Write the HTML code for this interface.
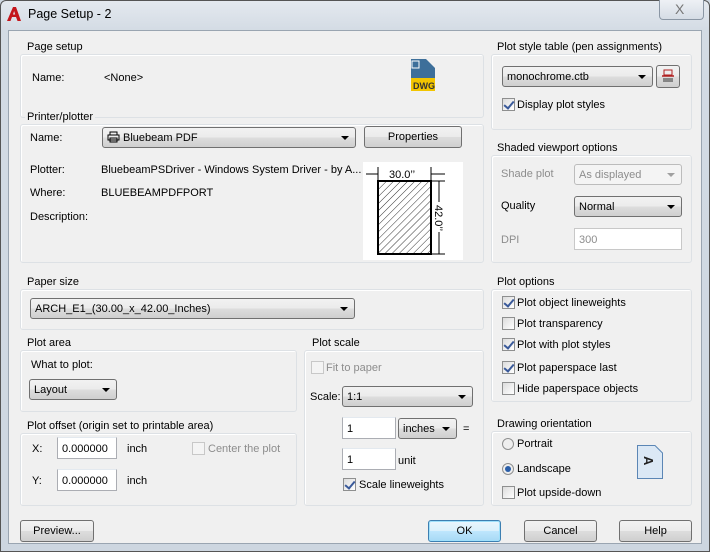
<!DOCTYPE html>
<html><head><meta charset="utf-8"><style>
*{box-sizing:border-box;margin:0;padding:0}
body{width:710px;height:552px;overflow:hidden;background:#cfd8e2;font-family:"Liberation Sans",sans-serif;font-size:11px;color:#000;position:relative}
.a{position:absolute;white-space:nowrap;line-height:14px}
.frame{position:absolute;left:0;top:0;width:710px;height:552px;border:1px solid #555;border-radius:6px 6px 0 0;background:linear-gradient(#e4e9ef,#d3dbe4 30px,#cdd6e0)}
.client{position:absolute;left:8px;top:30px;width:694px;height:514px;background:#f0f0f0;border:1px solid #9aa5b1}
.g{position:absolute;border:1px solid #dde1e5;border-radius:3px;background:#f0f0f0;box-shadow:inset 1px 1px 0 #fff}
.gl{position:absolute;background:#f0f0f0;padding:0 2px;line-height:14px;white-space:nowrap}
.dd{position:absolute;height:21px;border:1px solid #707070;border-radius:3px;background:linear-gradient(#f2f2f2,#ebebeb 50%,#dddddd 51%,#cfcfcf);padding:4px 4px 0;line-height:13px;white-space:nowrap}
.dd:after{content:"";position:absolute;right:6px;top:8px;border-left:4px solid transparent;border-right:4px solid transparent;border-top:4px solid #000}
.dis{border-color:#bcbcbc;background:#f4f4f4;color:#8d8d8d}
.dis:after{border-top-color:#a0a0a0}
.btn{position:absolute;height:22px;border:1px solid #707070;border-radius:3px;background:linear-gradient(#f2f2f2,#ebebeb 50%,#dddddd 51%,#cfcfcf);text-align:center;line-height:20px}
.tb{position:absolute;height:22px;border:1px solid #abadb3;border-top-color:#e3e9ef;background:#fff;padding:4px 4px 0;line-height:14px}
.cb{position:absolute;width:13px;height:13px;border:1px solid #8e8f8f;background:linear-gradient(135deg,#dcdcdc,#fff)}
.cb.c:after{content:"";position:absolute;left:3px;top:0px;width:4px;height:8px;border:solid #3a5a9a;border-width:0 2px 2px 0;transform:rotate(40deg)}
.cb.d{border-color:#c8c8c8;background:#f4f4f4}
.gray{color:#8d8d8d}
</style></head><body>
<div class="frame"></div>
<svg style="position:absolute;left:6px;top:6px" width="16" height="16" viewBox="0 0 16 16"><path d="M1 15 L7 1 H10 L15 15 H11.5 L10 11 H6 L4.5 15Z M7 8.5 H9.2 L8.1 5Z" fill="#c4161c"/></svg>
<div class="a" style="left:28px;top:7px;font-size:12.5px">Page Setup - 2</div>
<div style="position:absolute;left:659px;top:0;width:45px;height:20px;border:1px solid #8a96a4;border-top:none;border-radius:0 0 4px 4px;background:linear-gradient(#eef1f5,#d5dce5)"></div>
<div class="a" style="left:675px;top:2px;font-size:14px;color:#777">X</div>
<div class="client"></div>

<div class="g" style="left:20px;top:54px;width:464px;height:64px"></div><div class="gl" style="left:25px;top:40px">Page setup</div>
<div class="a" style="left:32px;top:71px">Name:</div><div class="a" style="left:104px;top:71px">&lt;None&gt;</div>
<svg style="position:absolute;left:408px;top:58px" width="30" height="34" viewBox="0 0 30 34"><path d="M3 1 H18 L27 10 V20 H3Z" fill="#3d6f9a"/><path d="M3 20 H27 V33 H3Z" fill="#f2c500"/><rect x="4" y="3" width="7" height="7" fill="none" stroke="#fff"/><text x="5" y="31" font-size="9" font-weight="bold" fill="#333" font-family="Liberation Sans">DWG</text></svg>

<div class="g" style="left:20px;top:124px;width:464px;height:139px"></div><div class="gl" style="left:25px;top:110px">Printer/plotter</div>
<div class="a" style="left:30px;top:131px">Name:</div>
<div class="dd" style="left:102px;top:127px;width:254px;padding-left:20px">Bluebeam PDF</div>
<svg style="position:absolute;left:107px;top:131px" width="13" height="12" viewBox="0 0 13 12"><path d="M3 4V1H10V4M1 4H12V9H1ZM3 7H10V11H3Z" fill="none" stroke="#000"/></svg>
<div class="btn" style="left:364px;top:126px;width:98px">Properties</div>
<div class="a" style="left:30px;top:163px">Plotter:</div><div class="a" style="left:101px;top:163px">BluebeamPSDriver - Windows System Driver - by A...</div>
<div class="a" style="left:30px;top:186px">Where:</div><div class="a" style="left:101px;top:186px">BLUEBEAMPDFPORT</div>
<div class="a" style="left:30px;top:210px">Description:</div>
<svg style="position:absolute;left:363px;top:162px" width="100" height="98" viewBox="0 0 100 98"><rect width="100" height="98" fill="#fff"/>
<defs><pattern id="h" width="5" height="5" patternUnits="userSpaceOnUse" patternTransform="rotate(45)"><line x1="0" y1="0" x2="0" y2="5" stroke="#000" stroke-width="0.8"/></pattern></defs>
<rect x="15" y="19" width="53" height="73" fill="url(#h)" stroke="#000" stroke-width="2"/>
<line x1="15" y1="5" x2="15" y2="18" stroke="#000"/><line x1="68" y1="5" x2="68" y2="18" stroke="#000"/>
<line x1="3" y1="12" x2="15" y2="12" stroke="#000"/><line x1="68" y1="12" x2="82" y2="12" stroke="#000"/>
<text x="26" y="16" font-size="11" font-family="Liberation Sans">30.0’’</text>
<line x1="69" y1="19" x2="82" y2="19" stroke="#000"/><line x1="69" y1="92" x2="82" y2="92" stroke="#000"/>
<line x1="76" y1="19" x2="76" y2="40" stroke="#000"/><line x1="76" y1="70" x2="76" y2="92" stroke="#000"/>
<text transform="translate(72,43) rotate(90)" font-size="11" font-family="Liberation Sans">42.0’’</text></svg>

<div class="g" style="left:20px;top:289px;width:464px;height:41px"></div><div class="gl" style="left:25px;top:275px">Paper size</div>
<div class="dd" style="left:30px;top:298px;width:325px">ARCH_E1_(30.00_x_42.00_Inches)</div>

<div class="g" style="left:20px;top:350px;width:277px;height:62px"></div><div class="gl" style="left:25px;top:336px">Plot area</div>
<div class="a" style="left:31px;top:358px">What to plot:</div>
<div class="dd" style="left:29px;top:379px;width:88px">Layout</div>

<div class="g" style="left:20px;top:433px;width:277px;height:73px"></div><div class="gl" style="left:25px;top:419px">Plot offset (origin set to printable area)</div>
<div class="a" style="left:32px;top:442px">X:</div><div class="tb" style="left:57px;top:437px;width:60px">0.000000</div><div class="a" style="left:127px;top:442px">inch</div>
<div class="cb d" style="left:192px;top:442px"></div><div class="a gray" style="left:208px;top:442px">Center the plot</div>
<div class="a" style="left:32px;top:474px">Y:</div><div class="tb" style="left:57px;top:469px;width:60px">0.000000</div><div class="a" style="left:127px;top:474px">inch</div>

<div class="g" style="left:304px;top:350px;width:180px;height:156px"></div><div class="gl" style="left:310px;top:336px">Plot scale</div>
<div class="cb d" style="left:311px;top:361px"></div><div class="a gray" style="left:326px;top:361px">Fit to paper</div>
<div class="a" style="left:310px;top:390px">Scale:</div><div class="dd" style="left:342px;top:386px;width:131px">1:1</div>
<div class="tb" style="left:342px;top:417px;width:54px">1</div>
<div class="dd" style="left:398px;top:418px;width:59px">inches</div><div class="a" style="left:463px;top:422px">=</div>
<div class="tb" style="left:342px;top:448px;width:54px">1</div><div class="a" style="left:398px;top:454px">unit</div>
<div class="cb c" style="left:343px;top:478px"></div><div class="a" style="left:359px;top:478px">Scale lineweights</div>

<div class="g" style="left:491px;top:54px;width:201px;height:76px"></div><div class="gl" style="left:495px;top:40px">Plot style table (pen assignments)</div>
<div class="dd" style="left:502px;top:66px;width:151px">monochrome.ctb</div>
<div class="btn" style="left:656px;top:65px;width:24px;height:23px"></div>
<svg style="position:absolute;left:661px;top:69px" width="14" height="14" viewBox="0 0 14 14"><rect x="3" y="1" width="8" height="5" fill="none" stroke="#b02020"/><line x1="1" y1="7" x2="13" y2="7" stroke="#b02020" stroke-width="1.5"/><line x1="2" y1="10" x2="12" y2="10" stroke="#333"/><line x1="2" y1="12" x2="12" y2="12" stroke="#333"/></svg>
<div class="cb c" style="left:502px;top:98px"></div><div class="a" style="left:517px;top:98px">Display plot styles</div>

<div class="g" style="left:491px;top:155px;width:201px;height:108px"></div><div class="gl" style="left:495px;top:141px">Shaded viewport options</div>
<div class="a gray" style="left:501px;top:167px">Shade plot</div><div class="dd dis" style="left:574px;top:164px;width:108px">As displayed</div>
<div class="a" style="left:501px;top:199px">Quality</div><div class="dd" style="left:574px;top:196px;width:108px">Normal</div>
<div class="a gray" style="left:501px;top:233px">DPI</div><div class="tb" style="left:574px;top:228px;width:108px;color:#8d8d8d;border-color:#c8c8c8">300</div>

<div class="g" style="left:491px;top:289px;width:201px;height:113px"></div><div class="gl" style="left:495px;top:275px">Plot options</div>
<div class="cb c" style="left:502px;top:296px"></div><div class="a" style="left:517px;top:296px">Plot object lineweights</div>
<div class="cb" style="left:502px;top:317px"></div><div class="a" style="left:517px;top:317px">Plot transparency</div>
<div class="cb c" style="left:502px;top:338px"></div><div class="a" style="left:517px;top:338px">Plot with plot styles</div>
<div class="cb c" style="left:502px;top:361px"></div><div class="a" style="left:517px;top:361px">Plot paperspace last</div>
<div class="cb" style="left:502px;top:382px"></div><div class="a" style="left:517px;top:382px">Hide paperspace objects</div>

<div class="g" style="left:491px;top:431px;width:201px;height:75px"></div><div class="gl" style="left:495px;top:417px">Drawing orientation</div>
<div style="position:absolute;left:502px;top:438px;width:12px;height:12px;border-radius:50%;border:1px solid #8e8f8f;background:#eee"></div><div class="a" style="left:517px;top:437px">Portrait</div>
<div style="position:absolute;left:502px;top:463px;width:12px;height:12px;border-radius:50%;border:1px solid #8e8f8f;background:#eee"><div style="position:absolute;left:2px;top:2px;width:6px;height:6px;border-radius:50%;background:#2a5ea8"></div></div><div class="a" style="left:517px;top:462px">Landscape</div>
<div class="cb" style="left:502px;top:486px"></div><div class="a" style="left:517px;top:486px">Plot upside-down</div>
<svg style="position:absolute;left:637px;top:445px" width="26" height="34" viewBox="0 0 26 34"><path d="M0.5 0.5 H18 L25.5 8 V33.5 H0.5Z" fill="#dbe8f5" stroke="#5b86b5"/><text transform="translate(7,11) rotate(90)" font-size="13" font-weight="bold" font-family="Liberation Sans" fill="#222">A</text></svg>

<div class="btn" style="left:20px;top:520px;width:74px">Preview...</div>
<div class="btn" style="left:428px;top:520px;width:73px;border-color:#3c7fb1;background:linear-gradient(#eaf6fd,#d9f0fc 50%,#bee6fd 51%,#a7d9f5);box-shadow:inset 0 0 0 1px #9fe0fb">OK</div>
<div class="btn" style="left:524px;top:520px;width:73px">Cancel</div>
<div class="btn" style="left:619px;top:520px;width:73px">Help</div>
</body></html>
